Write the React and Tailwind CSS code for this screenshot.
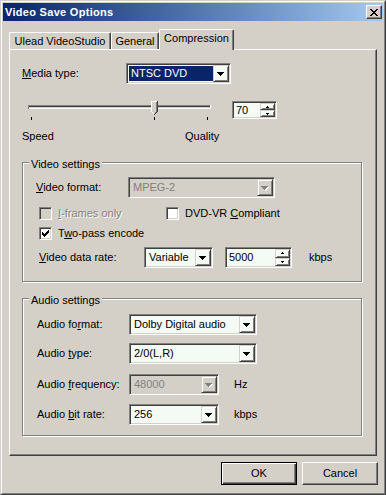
import React from 'react'

const sunken =
  'border border-t-[#808080] border-l-[#808080] border-r-white border-b-white shadow-[inset_1px_1px_0_#404040,inset_-1px_-1px_0_#d4d0c8] p-px'
const raised =
  'border border-t-[#d4d0c8] border-l-[#d4d0c8] border-r-[#404040] border-b-[#404040] shadow-[inset_1px_1px_0_#fff,inset_-1px_-1px_0_#808080]'
const greyText = 'text-[#808080] [text-shadow:1px_1px_0_#fff]'

function DownArrow({ disabled }) {
  const rows = [
    [0, 0, 7],
    [1, 1, 5],
    [2, 2, 3],
    [3, 3, 1],
  ]
  return (
    <svg width="8" height="5" shapeRendering="crispEdges">
      {disabled &&
        rows.map(([x, y, w]) => <rect key={'s' + y} x={x + 1} y={y + 1} width={w} height="1" fill="#fff" />)}
      {rows.map(([x, y, w]) => (
        <rect key={y} x={x} y={y} width={w} height="1" fill={disabled ? '#808080' : '#000'} />
      ))}
    </svg>
  )
}

function Combo({ value, className, selected, disabled }) {
  return (
    <div className={`${sunken} ${className} h-[21px] flex ${disabled ? 'bg-[#d4d0c8]' : 'bg-[#f4faf4]'}`}>
      <div className="flex-1 flex items-center py-px pl-px">
        <span
          className={`h-full flex items-center pl-[2px] ${
            selected ? 'flex-1 bg-[#0a246a] text-white' : disabled ? 'text-[#808080]' : ''
          }`}
        >
          {value}
        </span>
      </div>
      <div className={`${raised} w-[16px] h-[17px] flex items-center justify-center pt-px`}>
        <DownArrow disabled={disabled} />
      </div>
    </div>
  )
}

function SpinButton({ up }) {
  return (
    <div className={`${raised} flex-1 flex items-center justify-center`}>
      <svg width="3" height="2" shapeRendering="crispEdges">
        {up ? (
          <>
            <rect x="1" y="0" width="1" height="1" fill="#000" />
            <rect x="0" y="1" width="3" height="1" fill="#000" />
          </>
        ) : (
          <>
            <rect x="0" y="0" width="3" height="1" fill="#000" />
            <rect x="1" y="1" width="1" height="1" fill="#000" />
          </>
        )}
      </svg>
    </div>
  )
}

function Spin({ value, className }) {
  return (
    <div className={`${sunken} ${className} flex bg-[#f4faf4]`}>
      <div className="flex-1 flex items-center pl-[2px]">{value}</div>
      <div className="w-[15px] flex flex-col">
        <SpinButton up />
        <SpinButton />
      </div>
    </div>
  )
}

function Check({ checked, disabled }) {
  const cols = [2, 3, 4, 3, 2, 1, 0]
  return (
    <div className={`${sunken} w-[13px] h-[13px] shrink-0 ${disabled ? 'bg-[#d4d0c8]' : 'bg-white'}`}>
      {checked && (
        <svg width="9" height="9" shapeRendering="crispEdges">
          {cols.map((y, i) => (
            <rect key={i} x={i + 1} y={y + 1} width="1" height="3" fill="#000" />
          ))}
        </svg>
      )}
    </div>
  )
}

function Slider() {
  return (
    <svg width="198" height="22" shapeRendering="crispEdges">
      <rect x="6" y="7" width="183" height="1" fill="#808080" />
      <rect x="6" y="8" width="183" height="1" fill="#404040" />
      <rect x="6" y="9" width="183" height="1" fill="#d4d0c8" />
      <rect x="6" y="10" width="183" height="1" fill="#fff" />
      <rect x="6" y="7" width="1" height="4" fill="#808080" />
      <rect x="188" y="7" width="1" height="4" fill="#fff" />
      {[9, 132, 185].map((x) => (
        <rect key={x} x={x} y="19" width="1" height="3" fill="#000" />
      ))}
      <g transform="translate(129 3)">
        <polygon points="0,0 7,0 7,11 3.5,14.5 0,11" fill="#d4d0c8" />
        <rect x="0" y="0" width="6" height="1" fill="#fff" />
        <rect x="0" y="0" width="1" height="11" fill="#fff" />
        <rect x="1" y="11" width="1" height="1" fill="#fff" />
        <rect x="2" y="12" width="1" height="1" fill="#fff" />
        <rect x="5" y="1" width="1" height="10" fill="#808080" />
        <rect x="4" y="11" width="1" height="1" fill="#808080" />
        <rect x="6" y="0" width="1" height="11" fill="#404040" />
        <rect x="5" y="11" width="1" height="1" fill="#404040" />
        <rect x="4" y="12" width="1" height="1" fill="#404040" />
        <rect x="3" y="13" width="1" height="1" fill="#404040" />
      </g>
    </svg>
  )
}

function Group({ title, className, children }) {
  return (
    <div
      className={`relative w-[340px] border border-[#808080] shadow-[inset_1px_1px_0_#fff,1px_1px_0_#fff] ${className}`}
    >
      <span className="absolute left-[6px] -top-[5px] px-[2px] bg-[#d4d0c8]">{title}</span>
      {children}
    </div>
  )
}

function Row({ label, labelWidth, className, children }) {
  return (
    <div className={`flex items-center h-[21px] ${className}`}>
      <span className={labelWidth}>{label}</span>
      {children}
    </div>
  )
}

function CloseGlyph() {
  const rows = ['11000011', '01100110', '00111100', '00011000', '00111100', '01100110', '11000011']
  return (
    <svg width="8" height="7" shapeRendering="crispEdges">
      {rows.map((r, y) =>
        r.split('').map((c, x) => (c === '1' ? <rect key={`${x}-${y}`} x={x} y={y} width="1" height="1" fill="#000" /> : null))
      )}
    </svg>
  )
}

export default function App() {
  return (
    <div className="w-[386px] h-[495px] bg-[#d4d0c8] border border-t-[#d4d0c8] border-l-[#d4d0c8] border-r-[#404040] border-b-[#404040] font-['Liberation_Sans',Arial,sans-serif] text-[11px] leading-[13px] text-black select-none">
      <div className="h-full border border-t-white border-l-white border-r-[#808080] border-b-[#808080] p-px flex flex-col">
        {/* title bar */}
        <div className="h-[18px] shrink-0 bg-linear-to-r from-[#0a246a] to-[#a6caf0] flex items-center pl-[2px] pr-[1px]">
          <span className="text-white font-bold tracking-[0.3px]">Video Save Options</span>
          <div className="ml-auto w-[16px] h-[14px] border border-t-white border-l-white border-r-[#404040] border-b-[#404040] shadow-[inset_-1px_-1px_0_#808080] bg-[#d4d0c8] flex items-center justify-center">
            <CloseGlyph />
          </div>
        </div>

        {/* tabs */}
        <div className="relative z-10 mt-[8px] -mb-px pl-[6px] h-[21px] flex items-end">
          <div className="w-[102px] h-[17px] mb-px border-t border-l border-t-white border-l-white border-r border-r-[#404040] shadow-[inset_-1px_0_0_#808080] rounded-tl-[2px] rounded-tr-[2px] text-center pt-[2px]">
            Ulead VideoStudio
          </div>
          <div className="w-[48px] h-[17px] mb-px border-t border-l border-t-white border-l-white border-r border-r-[#404040] shadow-[inset_-1px_0_0_#808080] rounded-tl-[2px] rounded-tr-[2px] text-center pt-[2px]">
            General
          </div>
          <div className="w-[75px] h-[21px] bg-[#d4d0c8] border-t border-l border-t-white border-l-white border-r border-r-[#404040] shadow-[inset_-1px_0_0_#808080] rounded-tl-[2px] rounded-tr-[2px] text-center pt-[2px]">
            Compression
          </div>
        </div>

        {/* panel */}
        <div className="mx-[6px] h-[407px] shrink-0 border border-t-white border-l-white border-r-[#404040] border-b-[#404040] shadow-[inset_-1px_-1px_0_#808080] px-[12px]">
          <Row
            className="mt-[13px]"
            labelWidth="w-[104px]"
            label={
              <>
                <span className="underline">M</span>edia type:
              </>
            }
          >
            <Combo value="NTSC DVD" selected className="w-[105px]" />
          </Row>

          <div className="mt-[14px] h-[22px] flex items-start">
            <Slider />
            <Spin value="70" className="ml-[12px] mt-[3px] w-[45px] h-[18px]" />
          </div>

          <div className="mt-[10px] flex">
            <span className="w-[163px]">Speed</span>
            <span>Quality</span>
          </div>

          <Group title="Video settings" className="mt-[19px] h-[120px]">
            <Row
              className="mt-[14px] pl-[13px]"
              labelWidth="w-[92px]"
              label={
                <>
                  <span className="underline">V</span>ideo format:
                </>
              }
            >
              <Combo value="MPEG-2" disabled className="w-[147px]" />
            </Row>

            <div className="mt-[9px] pl-[16px] h-[13px] flex items-center">
              <div className="w-[127px] flex items-center">
                <Check disabled />
                <span className={`ml-[6px] ${greyText}`}>
                  <span className="underline">I</span>-frames only
                </span>
              </div>
              <Check />
              <span className="ml-[6px]">
                DVD-VR <span className="underline">C</span>ompliant
              </span>
            </div>

            <div className="mt-[7px] pl-[16px] h-[13px] flex items-center">
              <Check checked />
              <span className="ml-[6px]">
                T<span className="underline">w</span>o-pass encode
              </span>
            </div>

            <Row
              className="mt-[7px] pl-[16px]"
              labelWidth="w-[105px]"
              label={
                <>
                  <span className="underline">V</span>ideo data rate:
                </>
              }
            >
              <Combo value="Variable" className="w-[69px]" />
              <Spin value="5000" className="ml-[12px] w-[67px] h-[21px]" />
              <span className="ml-[17px]">kbps</span>
            </Row>
          </Group>

          <Group title="Audio settings" className="mt-[16px] h-[138px]">
            <Row
              className="mt-[15px] pl-[14px]"
              labelWidth="w-[92px]"
              label={
                <>
                  Audio fo<span className="underline">r</span>mat:
                </>
              }
            >
              <Combo value="Dolby Digital audio" className="w-[128px]" />
            </Row>
            <Row
              className="mt-[8px] pl-[14px]"
              labelWidth="w-[92px]"
              label={
                <>
                  Audio <span className="underline">t</span>ype:
                </>
              }
            >
              <Combo value="2/0(L,R)" className="w-[128px]" />
            </Row>
            <Row
              className="mt-[10px] pl-[14px]"
              labelWidth="w-[92px]"
              label={
                <>
                  Audio <span className="underline">f</span>requency:
                </>
              }
            >
              <Combo value="48000" disabled className="w-[90px]" />
              <span className="ml-[15px]">Hz</span>
            </Row>
            <Row
              className="mt-[9px] pl-[14px]"
              labelWidth="w-[92px]"
              label={
                <>
                  Audio <span className="underline">b</span>it rate:
                </>
              }
            >
              <Combo value="256" className="w-[90px]" />
              <span className="ml-[15px]">kbps</span>
            </Row>
          </Group>
        </div>

        {/* buttons */}
        <div className="mt-[6px] pr-[5px] flex justify-end gap-[5px]">
          <button className="w-[76px] h-[23px] border border-black shadow-[inset_1px_1px_0_#fff,inset_-1px_-1px_0_#404040,inset_-2px_-2px_0_#808080] bg-[#d4d0c8]">
            OK
          </button>
          <button className="w-[76px] h-[23px] border border-t-white border-l-white border-r-[#404040] border-b-[#404040] shadow-[inset_-1px_-1px_0_#808080] bg-[#d4d0c8]">
            Cancel
          </button>
        </div>
      </div>
    </div>
  )
}
